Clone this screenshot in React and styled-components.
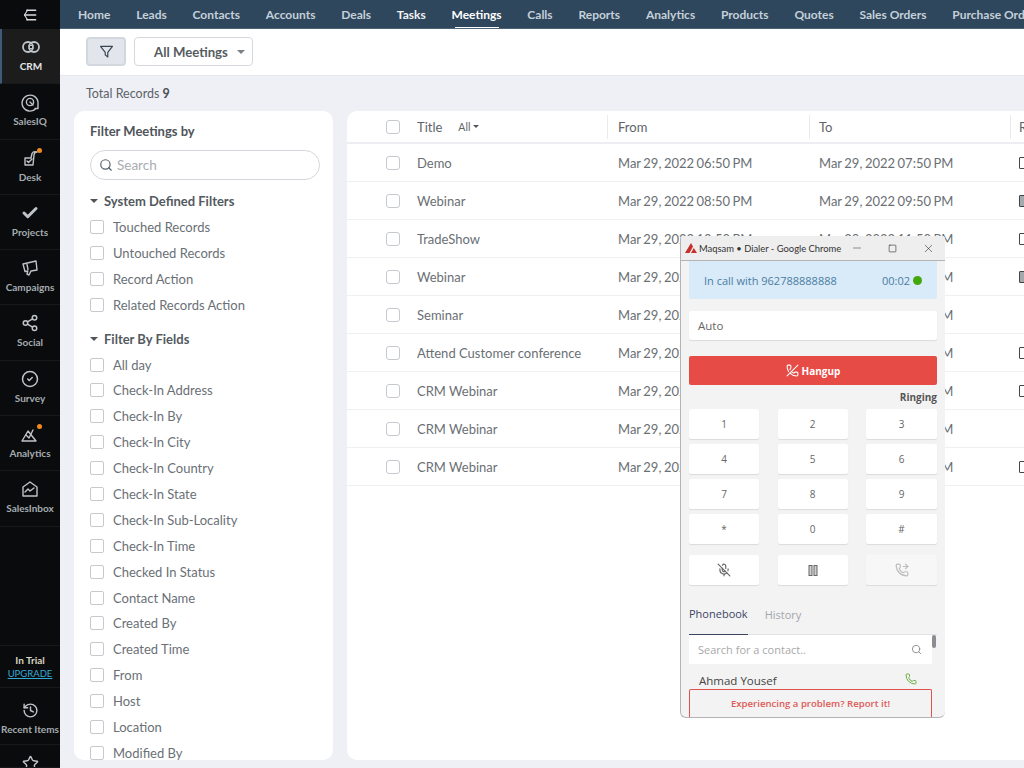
import React from 'react';
import styled, { createGlobalStyle } from 'styled-components';
import {
  Check,
  CircleCheck,
  History,
  MicOff,
  Phone,
  PhoneForwarded,
  PhoneOff,
  Search,
  Share2,
  Star,
  X,
  Minus,
  Square,
} from 'lucide-react';

const GlobalStyle = createGlobalStyle`
  html, body {
    margin: 0;
    padding: 0;
    height: 100%;
    overflow: hidden;
    background: #eef0f6;
    font-family: Lato, "Open Sans", sans-serif;
  }
  * { box-sizing: border-box; }
`;

const Page = styled.div`
  position: relative;
  display: flex;
  width: 1024px;
  height: 768px;
  overflow: hidden;
`;

/* left rail */
const Rail = styled.aside`
  flex: 0 0 60px;
  height: 768px;
  display: flex;
  flex-direction: column;
  background: #090b0c;
  color: #c9ced3;
`;

const RailTop = styled.div`
  height: 29px;
  display: flex;
  align-items: center;
  justify-content: center;
  color: #d8dbde;
`;

const RailItem = styled.div`
  position: relative;
  height: ${(p) => p.$h || 55.3}px;
  display: flex;
  flex-direction: column;
  align-items: center;
  padding-top: ${(p) => p.$pt || 8}px;
  gap: 3px;
  font-size: 10px;
  font-weight: 700;
  white-space: nowrap;
  color: ${(p) => (p.$active ? '#e4e6e8' : '#a5abb1')};
  border-bottom: 1px solid #17191b;
  background: ${(p) => (p.$active ? '#1c1c1c' : 'transparent')};
  border-left: ${(p) => (p.$active ? '2px solid #3d5a78' : '0')};
  overflow: hidden;
`;

const IconWrap = styled.span`
  position: relative;
  display: flex;
  width: 20px;
  height: 20px;
  align-items: center;
  justify-content: center;
  color: #bfc4c9;
`;

const Dot = styled.span`
  position: absolute;
  top: 0;
  right: -2px;
  width: 5px;
  height: 5px;
  border-radius: 50%;
  background: #f28a1e;
`;

const RailBottom = styled.div`
  margin-top: auto;
  display: flex;
  flex-direction: column;
`;

const Trial = styled.div`
  height: 43px;
  display: flex;
  flex-direction: column;
  align-items: center;
  justify-content: center;
  gap: 2px;
  font-size: 10px;
  font-weight: 700;
  color: #d9d6c4;
  border-bottom: 1px solid #17191b;
  border-top: 1px solid #17191b;
`;

const Upgrade = styled.span`
  font-size: 9.5px;
  font-weight: 400;
  color: #35a9d6;
  text-decoration: underline;
`;

/* main column */
const Main = styled.div`
  flex: 1;
  min-width: 0;
  display: flex;
  flex-direction: column;
  height: 768px;
`;

const TopNav = styled.nav`
  height: 29px;
  flex: none;
  display: flex;
  align-items: center;
  gap: 25.8px;
  padding-left: 18px;
  background: #2f475c;
  border-bottom: 1px solid #4c6478;
  overflow: hidden;
`;

const NavLink = styled.span`
  position: relative;
  flex: none;
  font-size: 12px;
  font-weight: 700;
  color: ${(p) => (p.$active ? '#ffffff' : p.$strong ? '#eef2f5' : '#c4d0da')};
  white-space: nowrap;
  ${(p) =>
    p.$active &&
    `&::after {
      content: '';
      position: absolute;
      left: 3px;
      right: 3px;
      bottom: -6px;
      height: 1px;
      background: #fff;
    }`}
`;

const Toolbar = styled.div`
  height: 47px;
  flex: none;
  display: flex;
  align-items: center;
  gap: 8px;
  padding: 0 0 1px 26px;
  background: #fff;
  border-bottom: 1px solid #e6e8ee;
`;

const FilterBtn = styled.div`
  width: 40px;
  height: 29px;
  display: flex;
  align-items: center;
  justify-content: center;
  background: #e2e6ec;
  border: 2px solid #d3d8df;
  border-radius: 4px;
  color: #3b4650;
`;

const ViewSelect = styled.div`
  width: 119px;
  height: 29px;
  display: flex;
  align-items: center;
  justify-content: space-between;
  padding: 0 7px 0 19px;
  background: #fff;
  border: 1px solid #d5d9df;
  border-radius: 4px;
  font-size: 13.2px;
  font-weight: 700;
  color: #555b61;
`;

const Caret = styled.span`
  width: 0;
  height: 0;
  border-left: ${(p) => p.$s || 4}px solid transparent;
  border-right: ${(p) => p.$s || 4}px solid transparent;
  border-top: ${(p) => p.$s || 4}px solid ${(p) => p.$c || '#7a8086'};
  flex: none;
`;

const Content = styled.div`
  flex: 1;
  min-height: 0;
  display: flex;
  flex-direction: column;
  padding: 0 0 8px 14px;
  background: #eef0f6;
`;

const Total = styled.div`
  height: 35px;
  padding: 10px 0 0 12px;
  font-size: 12.5px;
  color: #5c6268;
  b { color: #4a4f55; }
`;

const Panels = styled.div`
  flex: 1;
  min-height: 0;
  display: flex;
  gap: 14px;
`;

/* filter panel */
const FilterPanel = styled.section`
  flex: 0 0 259px;
  background: #fff;
  border-radius: 10px;
  padding: 12px 13px 0 16px;
  overflow: hidden;
`;

const FilterTitle = styled.div`
  font-size: 13px;
  font-weight: 700;
  color: #4e545a;
  line-height: 17px;
`;

const SearchBox = styled.div`
  height: 30px;
  margin: 10px 0 8px;
  display: flex;
  align-items: center;
  gap: 4px;
  padding: 0 8px;
  border: 1px solid #d3d7dc;
  border-radius: 15px;
  font-size: 13.5px;
  color: #a9adb2;
  svg { color: #55606a; }
`;

const GroupTitle = styled.div`
  height: 26px;
  display: flex;
  align-items: center;
  gap: 6px;
  font-size: 13px;
  font-weight: 700;
  color: #535a60;
  margin-top: ${(p) => p.$mt || 0}px;
`;

const FilterRow = styled.div`
  height: 25.9px;
  display: flex;
  align-items: center;
  gap: 9px;
  font-size: 13px;
  color: #6a7076;
  white-space: nowrap;
`;

const Box = styled.span`
  flex: none;
  width: 14px;
  height: 14px;
  border: 1.5px solid #c6cacf;
  border-radius: ${(p) => p.$r || 2}px;
  background: #fff;
`;

/* table */
const TablePanel = styled.section`
  flex: 1;
  min-width: 0;
  background: #fff;
  border-radius: 10px 0 0 10px;
  overflow: hidden;
`;

const HeadRow = styled.div`
  display: grid;
  grid-template-columns: 70px 191px 202px 201px 1fr;
  height: 33px;
  align-items: center;
  border-bottom: 2px solid #eceef3;
  font-size: 13px;
  color: #5e6469;
`;

const BodyRow = styled(HeadRow)`
  height: 38px;
  border-bottom: 1px solid #eff0f4;
  color: #6a6f74;
`;

const CheckCell = styled.div`
  display: flex;
  padding-left: 39px;
`;

const Cell = styled.div`
  display: flex;
  align-items: center;
  gap: 16px;
  height: ${(p) => (p.$head ? '24px' : 'auto')};
  padding-left: ${(p) => p.$pl || 0}px;
  border-right: ${(p) => (p.$line ? '1px solid #e9ebef' : '0')};
  white-space: nowrap;
  overflow: hidden;
`;

const DateText = styled.span`
  word-spacing: -0.8px;
`;

const AllTag = styled.span`
  display: flex;
  align-items: center;
  gap: 3px;
  font-size: 10.5px;
`;

const DocIcon = styled.span`
  flex: none;
  width: 10px;
  height: 12px;
  border: 1.5px solid #444;
  border-radius: 1px;
  background: ${(p) => (p.$filled ? '#a4a9ae' : 'transparent')};
`;

/* dialer window */
const Dialer = styled.div`
  position: absolute;
  left: 680px;
  top: 236px;
  width: 265px;
  height: 482px;
  display: flex;
  flex-direction: column;
  background: #f3f3f3;
  border-left: 1px solid #b4b4b4;
  border-bottom: 1px solid #b4b4b4;
  border-radius: 3px 3px 6px 6px;
  overflow: hidden;
`;

const TitleBar = styled.div`
  flex: none;
  height: 25px;
  display: flex;
  align-items: center;
  padding: 0 10px 0 4px;
  background: #eeeeee;
  border-bottom: 1px solid #b4b4b4;
  font-size: 9.4px;
  color: #333;
  white-space: nowrap;
  svg { flex: none; }
`;

const TitleText = styled.span`
  margin-left: 1px;
  flex: 1;
`;

const WinBtns = styled.div`
  display: flex;
  align-items: center;
  gap: 25px;
  color: #222;
`;

const DialerBody = styled.div`
  flex: 1;
  min-height: 0;
  display: flex;
  flex-direction: column;
  padding: 0 8px;
`;

const CallBanner = styled.div`
  flex: none;
  height: 38px;
  display: flex;
  align-items: center;
  justify-content: space-between;
  padding: 0 15px;
  background: #d9eaf8;
  border-radius: 0 0 2px 2px;
  font-family: "Open Sans", sans-serif;
  font-size: 11px;
  color: #4a7da3;
`;

const Timer = styled.span`
  display: flex;
  align-items: center;
  gap: 3px;
`;

const GreenDot = styled.span`
  width: 9px;
  height: 9px;
  border-radius: 50%;
  background: #43a80e;
`;

const AutoField = styled.div`
  flex: none;
  height: 29px;
  margin-top: 12px;
  display: flex;
  align-items: center;
  padding-left: 9px;
  background: #fff;
  border-radius: 2px;
  box-shadow: 0 1px 1px rgba(0, 0, 0, 0.1);
  font-family: "Open Sans", sans-serif;
  font-size: 11.5px;
  color: #666;
`;

const Hangup = styled.div`
  flex: none;
  height: 29px;
  margin-top: 16px;
  display: flex;
  align-items: center;
  justify-content: center;
  gap: 3px;
  background: #e64b46;
  border-radius: 2px;
  color: #fff;
  font-family: "Open Sans", sans-serif;
  font-size: 10px;
  font-weight: 700;
`;

const Ringing = styled.div`
  flex: none;
  height: 24px;
  display: flex;
  align-items: center;
  justify-content: flex-end;
  font-family: "Open Sans", sans-serif;
  font-size: 10px;
  font-weight: 700;
  color: #555;
`;

const KeyGrid = styled.div`
  flex: none;
  display: grid;
  grid-template-columns: 70px 70px 71px;
  justify-content: space-between;
  grid-auto-rows: 30px;
  row-gap: 5px;
`;

const Key = styled.div`
  display: flex;
  align-items: center;
  justify-content: center;
  background: ${(p) => (p.$off ? '#f7f7f7' : '#fff')};
  border-radius: 2px;
  box-shadow: 0 1px 1px rgba(0, 0, 0, 0.1);
  font-family: "Open Sans", sans-serif;
  font-size: 10px;
  color: ${(p) => (p.$off ? '#bdbdbd' : '#666')};
`;

const ActionGrid = styled(KeyGrid)`
  margin-top: 11px;
`;

const Tabs = styled.div`
  flex: none;
  height: 50px;
  display: flex;
  gap: 17px;
  border-bottom: 1px solid #e2e2e2;
`;

const Tab = styled.div`
  height: 50px;
  padding-top: 8px;
  display: flex;
  align-items: center;
  font-family: "Open Sans", sans-serif;
  font-size: 11px;
  color: ${(p) => (p.$active ? '#3c4564' : '#a3a6ac')};
  border-bottom: ${(p) => (p.$active ? '1px solid #3c4564' : '0')};
`;

const ContactArea = styled.div`
  position: relative;
  flex: 1;
  min-height: 0;
`;

const ContactSearch = styled.div`
  width: 243px;
  height: 29px;
  display: flex;
  align-items: center;
  justify-content: space-between;
  padding: 0 10px 0 9px;
  background: #fff;
  font-family: "Open Sans", sans-serif;
  font-size: 11px;
  color: #a9a9a9;
  svg { color: #888; }
`;

const ScrollThumb = styled.span`
  position: absolute;
  top: 0;
  right: 1px;
  width: 4px;
  height: 13px;
  border-radius: 2px;
  background: #8b8d92;
`;

const ContactRow = styled.div`
  width: 243px;
  display: flex;
  align-items: flex-start;
  justify-content: space-between;
  padding: 9px 15px 0 10px;
  font-family: "Open Sans", sans-serif;
  font-size: 11.5px;
  color: #444;
  svg { color: #6fae4a; }
`;

const ReportBox = styled.div`
  position: absolute;
  left: 0;
  bottom: 0;
  width: 243px;
  height: 28px;
  display: flex;
  align-items: center;
  justify-content: center;
  background: #f3f3f3;
  border: 1px solid #e0524d;
  border-bottom: 0;
  border-radius: 2px 2px 0 0;
  font-family: "Open Sans", sans-serif;
  font-size: 9.6px;
  font-weight: 600;
  color: #de5a57;
`;

/* drawings lucide has no close match for */
const Stroke = ({ children, size = 20 }) => (
  <svg
    width={size}
    height={size}
    viewBox="0 0 20 20"
    fill="none"
    stroke="currentColor"
    strokeWidth="1.4"
    strokeLinecap="round"
    strokeLinejoin="round"
  >
    {children}
  </svg>
);

const MenuIcon = () => (
  <Stroke size={16}>
    <path d="M7 4 3 10l4 6" />
    <path d="M6 4h11M3.500 10H17M6 16h11" strokeWidth="2" />
  </Stroke>
);

const FunnelIcon = () => (
  <Stroke size={17}>
    <path d="M3 4h14l-5.500 7v5.500L8.500 14v-3z" />
  </Stroke>
);

const CrmIcon = () => (
  <Stroke>
    <circle cx="7" cy="10" r="5" strokeWidth="1.8" />
    <circle cx="13" cy="10" r="5" strokeWidth="1.8" />
    <path d="M8 8.500h4M8 11.500h4" strokeWidth="1" />
  </Stroke>
);

const IqIcon = () => (
  <Stroke>
    <path d="M16 16.500A8 8 0 1 1 18 10v6.500h-3" />
    <circle cx="10" cy="10" r="3.600" />
    <path d="M10 10l3 3" />
  </Stroke>
);

const DeskIcon = () => (
  <Stroke>
    <path d="M5 17h8l1-10c.2-1.800 1.500-3 3-3-1.500-.5-4-.5-5 1.500L11 10H5z" />
    <path d="M7 13l1.500 1.500L12 11" />
  </Stroke>
);

const CampaignIcon = () => (
  <Stroke>
    <path d="M3 6l13-3 1 9-6 1-2 4-2-1 .8-3L5 13.500z" />
    <path d="M7 6.500l1 5" />
  </Stroke>
);

const AnalyticsIcon = () => (
  <Stroke>
    <path d="M2 17 8 7l8 10z" />
    <path d="M6 11l3 3 4-8" />
  </Stroke>
);

const InboxIcon = () => (
  <Stroke>
    <path d="M3 8l7-5 7 5v9H3z" />
    <path d="M5 13l3-3 2 2 4-3" />
  </Stroke>
);

const PauseIcon = () => (
  <svg width="10" height="11" viewBox="0 0 10 11" fill="#d0d0d0" stroke="#666" strokeWidth="1">
    <rect x="1" y="0.500" width="3" height="10" />
    <rect x="6" y="0.500" width="3" height="10" />
  </svg>
);

const MaqsamLogo = () => (
  <svg width="13" height="10" viewBox="0 0 13 10">
    <path d="M0 10 6 0l2 3.500L4.500 10zM6 10l2.800-5L12 10z" fill="#c8302b" />
  </svg>
);

const navItems = [
  ['Home'],
  ['Leads'],
  ['Contacts'],
  ['Accounts'],
  ['Deals'],
  ['Tasks', 'strong'],
  ['Meetings', 'active'],
  ['Calls'],
  ['Reports'],
  ['Analytics'],
  ['Products'],
  ['Quotes'],
  ['Sales Orders'],
  ['Purchase Orders'],
];

const railItems = [
  { label: 'CRM', icon: <CrmIcon />, active: true },
  { label: 'SalesIQ', icon: <IqIcon /> },
  { label: 'Desk', icon: <DeskIcon />, dot: true },
  { label: 'Projects', icon: <Check size={18} strokeWidth={4} /> },
  { label: 'Campaigns', icon: <CampaignIcon /> },
  { label: 'Social', icon: <Share2 size={18} /> },
  { label: 'Survey', icon: <CircleCheck size={18} /> },
  { label: 'Analytics', icon: <AnalyticsIcon />, dot: true },
  { label: 'SalesInbox', icon: <InboxIcon /> },
];

const systemFilters = ['Touched Records', 'Untouched Records', 'Record Action', 'Related Records Action'];

const fieldFilters = [
  'All day',
  'Check-In Address',
  'Check-In By',
  'Check-In City',
  'Check-In Country',
  'Check-In State',
  'Check-In Sub-Locality',
  'Check-In Time',
  'Checked In Status',
  'Contact Name',
  'Created By',
  'Created Time',
  'From',
  'Host',
  'Location',
  'Modified By',
];

const meetings = [
  ['Demo', '06:50 PM', '07:50 PM', 'doc'],
  ['Webinar', '08:50 PM', '09:50 PM', 'cal'],
  ['TradeShow', '10:50 PM', '11:50 PM', 'doc'],
  ['Webinar', '06:00 PM', '07:00 PM', 'cal'],
  ['Seminar', '07:30 PM', '08:30 PM', ''],
  ['Attend Customer conference', '05:00 PM', '06:00 PM', 'doc'],
  ['CRM Webinar', '04:00 PM', '05:00 PM', 'doc'],
  ['CRM Webinar', '03:00 PM', '04:00 PM', ''],
  ['CRM Webinar', '02:00 PM', '03:00 PM', 'doc'],
];

const keys = ['1', '2', '3', '4', '5', '6', '7', '8', '9', '*', '0', '#'];

export default function App() {
  return (
    <Page>
      <GlobalStyle />
      <Rail>
        <RailTop>
          <MenuIcon />
        </RailTop>
        {railItems.map((item) => (
          <RailItem key={item.label} $active={item.active}>
            <IconWrap>
              {item.icon}
              {item.dot && <Dot />}
            </IconWrap>
            {item.label}
          </RailItem>
        ))}
        <RailBottom>
          <Trial>
            In Trial
            <Upgrade>UPGRADE</Upgrade>
          </Trial>
          <RailItem $h={57} $pt={12}>
            <IconWrap>
              <History size={17} />
            </IconWrap>
            Recent Items
          </RailItem>
          <RailItem $h={23} $pt={10}>
            <IconWrap>
              <Star size={17} />
            </IconWrap>
          </RailItem>
        </RailBottom>
      </Rail>

      <Main>
        <TopNav>
          {navItems.map(([name, kind]) => (
            <NavLink key={name} $active={kind === 'active'} $strong={kind === 'strong'}>
              {name}
            </NavLink>
          ))}
        </TopNav>
        <Toolbar>
          <FilterBtn>
            <FunnelIcon />
          </FilterBtn>
          <ViewSelect>
            All Meetings
            <Caret />
          </ViewSelect>
        </Toolbar>
        <Content>
          <Total>
            Total Records <b>9</b>
          </Total>
          <Panels>
            <FilterPanel>
              <FilterTitle>Filter Meetings by</FilterTitle>
              <SearchBox>
                <Search size={14} />
                Search
              </SearchBox>
              <GroupTitle>
                <Caret $c="#4e545a" />
                System Defined Filters
              </GroupTitle>
              {systemFilters.map((f) => (
                <FilterRow key={f}>
                  <Box />
                  {f}
                </FilterRow>
              ))}
              <GroupTitle $mt={8}>
                <Caret $c="#4e545a" />
                Filter By Fields
              </GroupTitle>
              {fieldFilters.map((f) => (
                <FilterRow key={f}>
                  <Box />
                  {f}
                </FilterRow>
              ))}
            </FilterPanel>

            <TablePanel>
              <HeadRow>
                <CheckCell>
                  <Box $r={3} />
                </CheckCell>
                <Cell $head $line>
                  Title
                  <AllTag>
                    All
                    <Caret $s={3} $c="#555" />
                  </AllTag>
                </Cell>
                <Cell $head $line $pl={10}>
                  From
                </Cell>
                <Cell $head $line $pl={9}>
                  To
                </Cell>
                <Cell $head $pl={8}>
                  Related To
                </Cell>
              </HeadRow>
              {meetings.map(([title, from, to, kind], i) => (
                <BodyRow key={i}>
                  <CheckCell>
                    <Box $r={3} />
                  </CheckCell>
                  <Cell>{title}</Cell>
                  <Cell $pl={10}>
                    <DateText>Mar 29, 2022 {from}</DateText>
                  </Cell>
                  <Cell $pl={9}>
                    <DateText>Mar 29, 2022 {to}</DateText>
                  </Cell>
                  <Cell $pl={8}>{kind && <DocIcon $filled={kind === 'cal'} />}</Cell>
                </BodyRow>
              ))}
            </TablePanel>
          </Panels>
        </Content>
      </Main>

      <Dialer>
        <TitleBar>
          <MaqsamLogo />
          <TitleText>Maqsam • Dialer - Google Chrome</TitleText>
          <WinBtns>
            <Minus size={12} strokeWidth={1} />
            <Square size={9} strokeWidth={1.5} />
            <X size={13} strokeWidth={1} />
          </WinBtns>
        </TitleBar>
        <DialerBody>
          <CallBanner>
            In call with 962788888888
            <Timer>
              00:02 <GreenDot />
            </Timer>
          </CallBanner>
          <AutoField>Auto</AutoField>
          <Hangup>
            <PhoneOff size={13} />
            Hangup
          </Hangup>
          <Ringing>Ringing</Ringing>
          <KeyGrid>
            {keys.map((k) => (
              <Key key={k}>{k}</Key>
            ))}
          </KeyGrid>
          <ActionGrid>
            <Key>
              <MicOff size={14} />
            </Key>
            <Key>
              <PauseIcon />
            </Key>
            <Key $off>
              <PhoneForwarded size={14} />
            </Key>
          </ActionGrid>
          <Tabs>
            <Tab $active>Phonebook</Tab>
            <Tab>History</Tab>
          </Tabs>
          <ContactArea>
            <ContactSearch>
              Search for a contact..
              <Search size={11} />
            </ContactSearch>
            <ScrollThumb />
            <ContactRow>
              Ahmad Yousef
              <Phone size={12} />
            </ContactRow>
            <ReportBox>Experiencing a problem? Report it!</ReportBox>
          </ContactArea>
        </DialerBody>
      </Dialer>
    </Page>
  );
}
